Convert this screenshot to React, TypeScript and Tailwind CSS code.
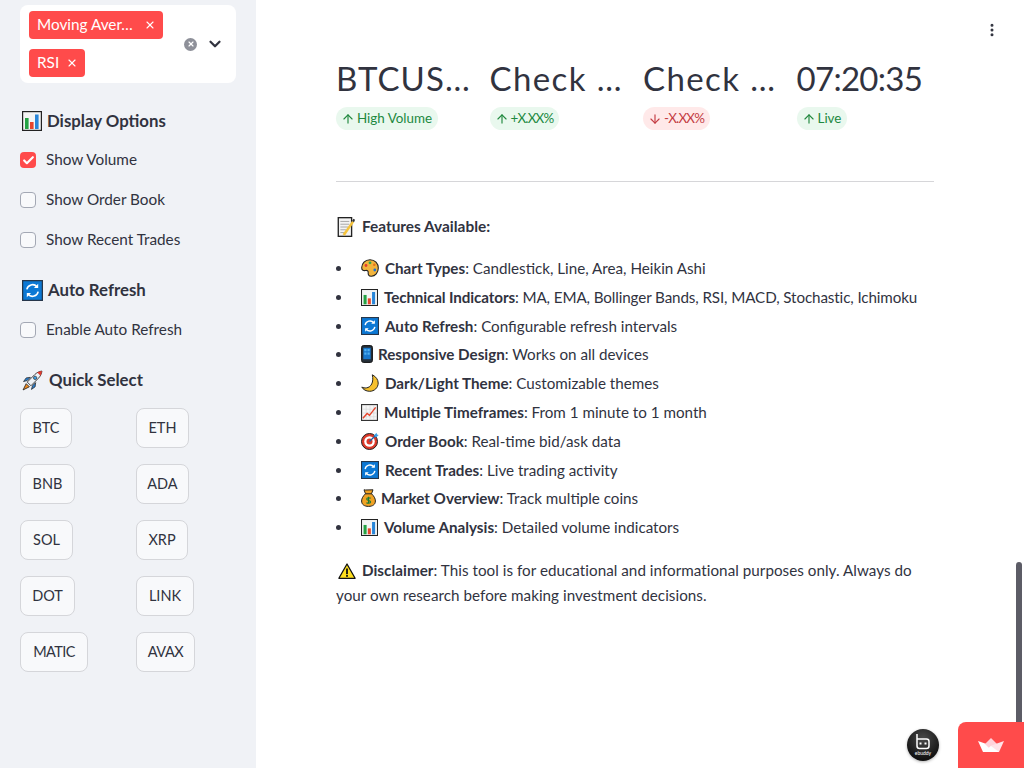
import React from "react";
import { Check, X, ChevronDown, ArrowUp, ArrowDown, EllipsisVertical } from "lucide-react";

const FONT = "font-['Lato','Noto_Sans',sans-serif]";

type E = "chart" | "refresh" | "rocket" | "memo" | "palette" | "phone" | "moon" | "trend" | "target" | "money" | "warn";

function Emoji({ n, w, h, cls = "" }: { n: E; w: number; h: number; cls?: string }) {
  const vb: Record<E, string> = { chart: "0 0 20 20", refresh: "0 0 20 20", rocket: "0 0 20 20", memo: "0 0 16 18", palette: "0 0 18 18", phone: "0 0 12 18", moon: "0 0 18 18", trend: "0 0 18 18", target: "0 0 18 18", money: "0 0 15 18", warn: "0 0 18 16" };
  return (
    <svg width={w} height={h} viewBox={vb[n]} className={`inline-block shrink-0 align-[-3px] ${cls}`}>
      {n === "chart" && (<g>
        <rect x=".6" y=".6" width="18.8" height="18.8" fill="#f4f4f4" stroke="#222" strokeWidth="1.2" />
        <rect x="3" y="7" width="3.6" height="11" fill="#25a244" /><rect x="8" y="11" width="3.6" height="7" fill="#e8452c" /><rect x="13" y="3.5" width="3.6" height="14.5" fill="#2a86d8" />
      </g>)}
      {n === "refresh" && (<g>
        <rect x=".6" y=".6" width="18.8" height="18.8" fill="#0c78d4" stroke="#26364a" strokeWidth="1.2" />
        <path d="M4.6 9a5.5 5.5 0 0 1 9.6-2.6" fill="none" stroke="#fff" strokeWidth="1.5" /><path d="M15.4 3.6v4h-4z" fill="#fff" />
        <path d="M15.4 11a5.5 5.5 0 0 1-9.6 2.6" fill="none" stroke="#fff" strokeWidth="1.5" /><path d="M4.6 16.4v-4h4z" fill="#fff" />
      </g>)}
      {n === "rocket" && (<g>
        <path d="M4 13 1 19l6-3z" fill="#f08a1d" stroke="#222" strokeWidth=".8" />
        <path d="M5 10 1.5 11 4 7.5 8 7z" fill="#2a7fd0" stroke="#222" strokeWidth=".7" /><path d="M10 15l-1 3.5 3.5-2.5.5-4z" fill="#2a7fd0" stroke="#222" strokeWidth=".7" />
        <path d="M5 11.5 12 4.5C14 2.5 16.500 1.300 19 1c-.3 2.500-1.500 5-3.500 7L8.500 15z" fill="#eef2f6" stroke="#222" strokeWidth=".8" />
        <path d="M14.500 2.300C16 1.600 17.500 1.200 19 1c-.2 1.500-.6 3-1.300 4.500z" fill="#e33b2e" /><circle cx="12.500" cy="7.500" r="1.600" fill="#3aa0e8" stroke="#222" strokeWidth=".6" />
      </g>)}
      {n === "memo" && (<g>
        <rect x=".6" y=".6" width="12" height="16.800" fill="#f3f3f3" stroke="#222" strokeWidth="1.200" />
        <path d="M2.500 4h8M2.500 6.500h8M2.500 9h7M2.500 11.500h5M2.500 14h4" stroke="#a9a9a9" strokeWidth=".9" />
        <path d="M4.500 15.500 13 3.500l1.800 1.300-8.300 12z" fill="#f5c33b" /><path d="M13 3.500 14.200 1.500l1.500 1-.9 2.300z" fill="#333" />
      </g>)}
      {n === "palette" && (<g>
        <path d="M9 .7C4 .7.700 4.300.700 8.700c0 2.800 2 3.200 3.700 2.800 1.700-.4 3 .3 2.800 2-.2 1.500.2 3.700 3 3.800 4 .1 7.100-3.600 7.100-8.300S14 .7 9 .7z" fill="#f2b43c" stroke="#222" strokeWidth="1.100" />
        <circle cx="5" cy="6.500" r="1.400" fill="#e33b2e" /><circle cx="9" cy="3.800" r="1.400" fill="#2fa84f" /><circle cx="13.300" cy="5.800" r="1.300" fill="#e8731e" /><circle cx="13.800" cy="11" r="1.400" fill="#1f6fd0" />
      </g>)}
      {n === "phone" && (<g>
        <rect x=".6" y=".6" width="10.800" height="16.800" rx="1.800" fill="#26303a" stroke="#111" />
        <rect x="2.300" y="2.800" width="7.400" height="11.400" fill="#1877cc" />
        <rect x="3.300" y="4" width="2.200" height="2.200" fill="#4fb0f0" /><rect x="6.500" y="4" width="2.200" height="2.200" fill="#4fb0f0" /><rect x="3.300" y="7.500" width="2.200" height="2.200" fill="#4fb0f0" /><rect x="6.500" y="7.500" width="2.200" height="2.200" fill="#4fb0f0" />
      </g>)}
      {n === "moon" && (
        <path d="M11.300.8c3.700 1.800 5.900 5 5.900 8.200 0 4.700-3.900 8.300-8.500 8.300-3.500 0-6.600-1.700-7.900-4.300 1.300.8 3 1.100 4.500.9 4.800-.5 7.700-5.800 6-13.100z" fill="#f6c02c" stroke="#222" strokeWidth="1" />
      )}
      {n === "trend" && (<g>
        <rect x=".6" y=".6" width="16.800" height="16.800" fill="#f6f6f6" stroke="#333" strokeWidth="1.200" />
        <path d="M1 5.500h16M1 9.500h16M1 13.500h16M5.500 1v16M9.500 1v16M13.500 1v16" stroke="#d2d2d2" strokeWidth=".6" />
        <path d="M2 15 6.500 10 9 12l6.500-8.500" fill="none" stroke="#e8452c" strokeWidth="1.500" />
      </g>)}
      {n === "target" && (<g>
        <circle cx="8.500" cy="9.500" r="8" fill="#dd3a2a" stroke="#222" strokeWidth="1" /><circle cx="8.500" cy="9.500" r="5.300" fill="#fff" /><circle cx="8.500" cy="9.500" r="3" fill="#dd3a2a" />
        <path d="M8.500 9.500 15 3" stroke="#1d5fa8" strokeWidth="1.300" /><path d="M13 3.500 15.500.8l.5 1.700 1.700.5L15 5.500z" fill="#39a0e8" />
      </g>)}
      {n === "money" && (<g>
        <path d="M4.500 1 3 .8l1.500 4C2 7 .6 9.600.6 12c0 3.500 2.700 5.400 6.900 5.400s6.900-1.900 6.900-5.400c0-2.400-1.400-5-3.900-7.200L12 .8z" fill="#f0a224" stroke="#222" strokeWidth="1" />
        <path d="M4.500 4.800h6" stroke="#222" strokeWidth="1" />
        <path d="M9.600 9.400c-.5-.8-3.900-1-3.900.7 0 1.800 3.900 1 3.900 2.900 0 1.700-3.500 1.500-4.100.6M7.600 7.800v7" fill="none" stroke="#177a35" strokeWidth="1.100" />
      </g>)}
      {n === "warn" && (<g>
        <path d="M9 1 .9 15.300h16.200z" fill="#ffdf1e" stroke="#111" strokeWidth="1.300" strokeLinejoin="round" />
        <rect x="8.100" y="5.500" width="1.800" height="5.700" fill="#111" /><rect x="8.100" y="12" width="1.800" height="1.800" fill="#111" />
      </g>)}
    </svg>
  );
}

function Head({ e, s, t, cls, gap }: { e: E; s: number; t: string; cls: string; gap: string }) {
  return (
    <div className={`flex items-center h-[26px] pl-[2px] text-[16.8px] font-bold text-[#31333f] ${gap} ${cls}`}>
      <Emoji n={e} w={s} h={s} />
      <span>{t}</span>
    </div>
  );
}

function Cb({ label, on, cls }: { label: string; on?: boolean; cls: string }) {
  return (
    <div className={`flex items-center h-[24px] gap-[10px] text-[15.3px] text-[#31333f] ${cls}`}>
      <span className={`w-[16px] h-[16px] rounded-[4px] flex items-center justify-center ${on ? "bg-[#ff4b4b]" : "bg-[#f8f9fb] border border-[#a3a8b4]"}`}>
        {on && <Check size={13} strokeWidth={4} color="#fff" />}
      </span>
      <span className="-translate-y-px">{label}</span>
    </div>
  );
}

function Btn({ t, w, cls = "" }: { t: string; w: string; cls?: string }) {
  return (
    <div className={`h-[40px] ${w} ${cls} rounded-lg border border-[#d5d6da] bg-[#f8f9fb] flex items-center justify-center text-[14.5px] text-[#31333f]`}>{t}</div>
  );
}

function Tag({ t, w }: { t: string; w: string }) {
  return (
    <div className={`h-[28px] ${w} bg-[#ff4b4b] rounded-[4px] text-white text-[15.3px] flex items-center justify-between pl-[8px] pr-[7px]`}>
      <span className="-translate-y-px">{t}</span>
      <X size={12} strokeWidth={2.2} />
    </div>
  );
}

function Metric({ v, d, up, vc, dc }: { v: string; d: string; up: boolean; vc: string; dc: string }) {
  return (
    <div className="flex flex-col items-start w-[153.5px] shrink-0">
      <div className={`h-[50px] flex items-center text-[33px] text-[#31333f] leading-none whitespace-nowrap ${vc}`}>{v}</div>
      <div className={`mt-[4px] h-[23px] rounded-full flex items-center gap-[2px] pl-[5px] pr-[6px] text-[13.4px] whitespace-nowrap ${dc} ${up ? "bg-[#e9f8ee] text-[#21893f]" : "bg-[#ffe9e9] text-[#c43c43]"}`}>
        {up ? <ArrowUp size={14} className="shrink-0" /> : <ArrowDown size={14} className="shrink-0" />}
        <span>{d}</span>
      </div>
    </div>
  );
}

const items: [E, number, number, string, string, string, string][] = [
  ["palette", 18, 18, "mr-[6px]", "Chart Types", "Candlestick, Line, Area, Heikin Ashi", ""],
  ["chart", 17, 17, "mr-[6px]", "Technical Indicators", "MA, EMA, Bollinger Bands, RSI, MACD, Stochastic, Ichimoku", "tracking-[-0.11px]"],
  ["refresh", 18, 18, "mr-[6px]", "Auto Refresh", "Configurable refresh intervals", ""],
  ["phone", 12, 18, "mr-[5px]", "Responsive Design", "Works on all devices", ""],
  ["moon", 18, 18, "mr-[6px]", "Dark/Light Theme", "Customizable themes", ""],
  ["trend", 17, 17, "mr-[6px]", "Multiple Timeframes", "From 1 minute to 1 month", ""],
  ["target", 18, 18, "mr-[6px]", "Order Book", "Real-time bid/ask data", ""],
  ["refresh", 18, 18, "mr-[6px]", "Recent Trades", "Live trading activity", ""],
  ["money", 15, 18, "mr-[5px]", "Market Overview", "Track multiple coins", ""],
  ["chart", 17, 17, "mr-[6px]", "Volume Analysis", "Detailed volume indicators", ""],
];

export default function App() {
  return (
    <div className={`flex w-[1024px] h-[768px] overflow-hidden bg-white relative ${FONT}`}>
      <aside className="w-[256px] shrink-0 bg-[#f0f2f6] px-[20px] pt-[5px]">
        <div className="h-[78px] bg-white rounded-lg flex items-center pl-[9px]">
          <div className="flex flex-col gap-[10px] w-[155px]">
            <Tag t="Moving Aver…" w="w-[134px]" />
            <Tag t="RSI" w="w-[56px]" />
          </div>
          <span className="w-[13px] h-[13px] rounded-full bg-[#8e9099] flex items-center justify-center text-white">
            <X size={8} strokeWidth={3.5} />
          </span>
          <ChevronDown size={18} strokeWidth={3} color="#31333f" className="ml-[9px]" />
        </div>
        <Head e="chart" s={20} t="Display Options" cls="mt-[25px]" gap="gap-[5px]" />
        <Cb label="Show Volume" on cls="mt-[14px]" />
        <Cb label="Show Order Book" cls="mt-[16px]" />
        <Cb label="Show Recent Trades" cls="mt-[16px]" />
        <Head e="refresh" s={21} t="Auto Refresh" cls="mt-[25px]" gap="gap-[5px]" />
        <Cb label="Enable Auto Refresh" cls="mt-[15px]" />
        <Head e="rocket" s={21} t="Quick Select" cls="mt-[25px]" gap="gap-[6px]" />
        <div className="grid grid-cols-[116px_1fr] gap-y-[16px] mt-[15px]">
          <Btn t="BTC" w="w-[52px]" /><Btn t="ETH" w="w-[53px]" />
          <Btn t="BNB" w="w-[55px]" /><Btn t="ADA" w="w-[53px]" />
          <Btn t="SOL" w="w-[53px]" /><Btn t="XRP" w="w-[52px]" />
          <Btn t="DOT" w="w-[55px]" /><Btn t="LINK" w="w-[58px]" />
          <Btn t="MATIC" w="w-[68px]" cls="tracking-[-0.6px]" /><Btn t="AVAX" w="w-[59px]" cls="tracking-[-0.4px]" />
        </div>
      </aside>
      <main className="flex-1 min-w-0 pl-[80px] pr-[90px] pt-[53px] text-[#31333f]">
        <div className="flex">
          <Metric v="BTCUS…" d="High Volume" up vc="tracking-[1.1px]" dc="" />
          <Metric v="Check …" d="+X.XX%" up vc="tracking-[1.4px]" dc="tracking-[-0.8px] [font-kerning:none]" />
          <Metric v="Check …" d="-X.XX%" up={false} vc="tracking-[1.4px]" dc="tracking-[-0.8px] [font-kerning:none]" />
          <Metric v="07:20:35" d="Live" up vc="tracking-[-0.7px]" dc="" />
        </div>
        <hr className="mt-[51px] border-t border-[#d6d6d9]" />
        <p className="mt-[33px] h-[24px] flex items-center text-[15.4px] font-bold gap-[6px]"><Emoji n="memo" w={19} h={20} cls="ml-[1px]" /><span>Features Available:</span></p>
        <ul className="mt-[15px] list-disc pl-[17px] text-[15.2px]">
          {items.map((i, k) => (
            <li key={k} className={`h-[28.8px] leading-[28.8px] whitespace-nowrap ${i[6]}`}>
              <Emoji n={i[0]} w={i[1]} h={i[2]} cls={`ml-[8px] ${i[3]}`} /><b>{i[4]}</b>: {i[5]}
            </li>
          ))}
        </ul>
        <p className="mt-[16px] text-[15.2px] leading-[25px] tracking-[0.04px]"><Emoji n="warn" w={18} h={16} cls="ml-[2px] mr-[6px]" /><b>Disclaimer</b>: This tool is for educational and informational purposes only. Always do your own research before making investment decisions.</p>
      </main>
      <div className="absolute right-[24px] top-[22px] text-[#31333f]"><EllipsisVertical size={16} strokeWidth={2.5} /></div>
      <div className="absolute left-[1016px] top-[562px] w-[6px] h-[170px] rounded-full bg-[#5c5c66]" />
      <div className="absolute left-[907px] top-[729px] w-[32px] h-[32px] rounded-full bg-[radial-gradient(circle_at_50%_30%,#4a4a4a,#111_75%)] shadow-[0_1px_3px_rgba(0,0,0,0.3)] flex flex-col items-center pt-[5px]">
        <svg width="16" height="17" viewBox="0 0 16 17" fill="none"><path d="M2 0v12a2.500 2.500 0 0 0 2.500 2.500h7a2.500 2.500 0 0 0 2.500-2.500V7.500A2.500 2.500 0 0 0 11.500 5H2" stroke="#fff" strokeWidth="1.500" /><rect x="4.500" y="8.500" width="2" height="2" fill="#fff" /><rect x="9.500" y="8.500" width="2" height="2" fill="#fff" /></svg>
        <span className="text-[5px] leading-[5px] text-white">ebuddy</span>
      </div>
      <div className="absolute left-[958px] top-[722px] w-[66px] h-[46px] bg-[#ff4b4b] rounded-tl-lg flex items-center justify-center">
        <svg width="26" height="15" viewBox="0 0 26 15"><path d="M0 3 L5 14 H13 L14 8 Z" fill="#fff" /><path d="M7 6 L13 0 L19 6 L13 12 Z" fill="#ffd2da" /><path d="M26 3 L21 14 H13 L12 8 Z" fill="#ffe3e8" /><path d="M5 14 L13 8 L21 14 Z" fill="#fff" /></svg>
      </div>
    </div>
  );
}
